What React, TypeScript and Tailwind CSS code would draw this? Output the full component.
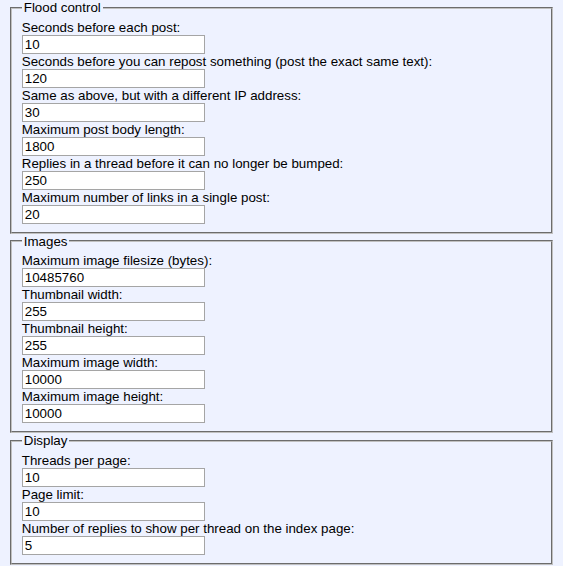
const sections = [
  {
    legend: "Flood control",
    fields: [
      { label: "Seconds before each post:", value: "10" },
      { label: "Seconds before you can repost something (post the exact same text):", value: "120" },
      { label: "Same as above, but with a different IP address:", value: "30" },
      { label: "Maximum post body length:", value: "1800" },
      { label: "Replies in a thread before it can no longer be bumped:", value: "250" },
      { label: "Maximum number of links in a single post:", value: "20" },
    ],
  },
  {
    legend: "Images",
    fields: [
      { label: "Maximum image filesize (bytes):", value: "10485760" },
      { label: "Thumbnail width:", value: "255" },
      { label: "Thumbnail height:", value: "255" },
      { label: "Maximum image width:", value: "10000" },
      { label: "Maximum image height:", value: "10000" },
    ],
  },
  {
    legend: "Display",
    fields: [
      { label: "Threads per page:", value: "10" },
      { label: "Page limit:", value: "10" },
      { label: "Number of replies to show per thread on the index page:", value: "5" },
    ],
  },
];

export default function App() {
  return (
    <div className="min-h-[566px] w-full bg-[#eef2ff] px-2 font-['Liberation_Sans',Arial,sans-serif] text-[13.333px] leading-[15px] text-black">
      {sections.map((section) => (
        <fieldset
          key={section.legend}
          className="mx-[2px] border-2 border-[#c0c0c0] px-[9.75px] pt-[4.55px] pb-[8.125px] [border-style:groove]"
        >
          <legend className="px-[2px] leading-[15px]">{section.legend}</legend>
          {section.fields.map((field) => (
            <label key={field.label} className="block">
              <span className="block h-[15px] whitespace-nowrap">{field.label}</span>
              <input
                type="text"
                defaultValue={field.value}
                className="block h-[19px] w-[183px] border border-[#a5a5a5] bg-white px-[2px] py-[1px] text-[13.333px] leading-[15px] outline-none"
              />
            </label>
          ))}
        </fieldset>
      ))}
    </div>
  );
}
